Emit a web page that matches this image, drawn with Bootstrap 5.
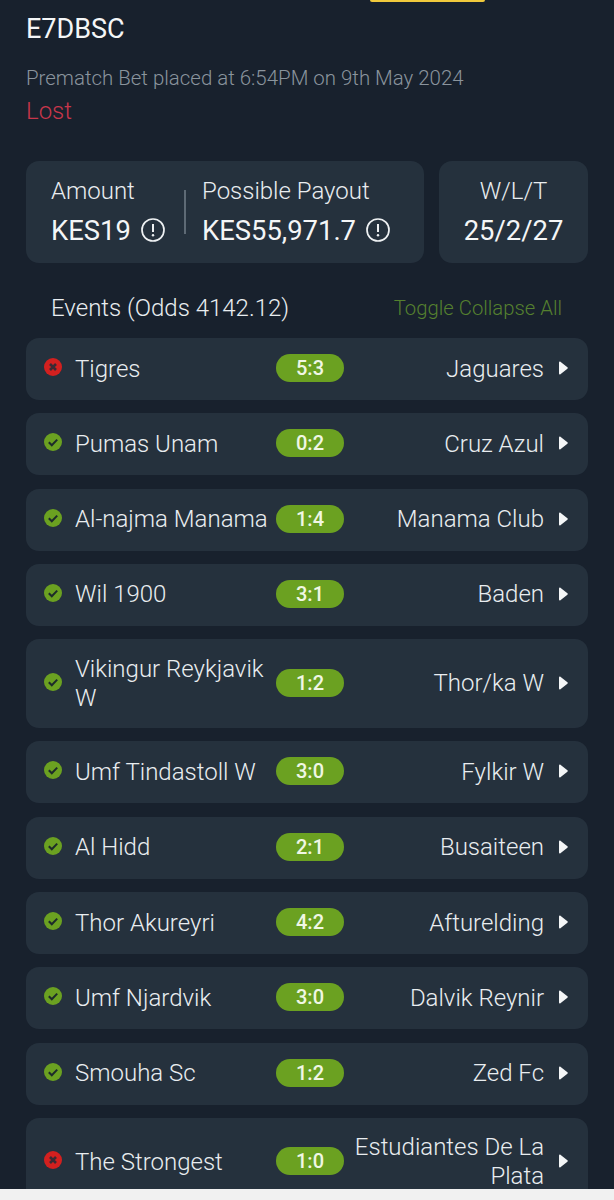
<!DOCTYPE html>
<html lang="en">
<head>
  <meta charset="UTF-8">
  <meta name="viewport" content="width=device-width, initial-scale=1.0">
  <title>Bet E7DBSC</title>
  <link href="https://cdn.jsdelivr.net/npm/bootstrap@5.3.0/dist/css/bootstrap.min.css" rel="stylesheet">
  <style>
    body{background:#f1f1f1;font-family:Roboto,"Liberation Sans",sans-serif;font-weight:300;color:#e9edf0;}
    .screen{width:614px;height:1189px;overflow:hidden;background:#18212d;padding:0 26px;}
    .top-tab{width:115px;height:2px;margin-left:344px;background:#f0c93c;border-radius:0 0 6px 6px;}
    .bet-id{font-size:27px;font-weight:400;line-height:30px;margin-top:12px;color:#f4f6f7;}
    .bet-meta{font-size:20.45px;line-height:28px;margin-top:20px;color:#8a949d;}
    .bet-lost{font-size:24px;line-height:30px;margin-top:4px;color:#c8364b;}
    .stat-row{gap:15px;margin-top:35px;}
    .stat-box{height:102px;background:#25313d;border-radius:13px;}
    .stat-main{width:398px;padding:15px 0 0 25px;}
    .stat-side{width:149px;padding-top:15px;}
    .stat-label{font-size:24px;line-height:30px;}
    .stat-val{font-size:27.4px;font-weight:400;line-height:34px;margin-top:8px;color:#f4f6f7;white-space:nowrap;}
    .stat-amount{width:133px;}
    .stat-line{width:2px;height:44px;margin:14px 16px 0 0;background:#5e6a75;}
    .info-ico{width:26px;height:26px;vertical-align:-3px;margin-left:2px;}
    .events-head{margin-top:28px;padding:0 26px 0 25px;height:34px;}
    .events-title{font-size:24px;}
    .events-toggle{font-size:20.3px;color:#55802f;}
    .match-list{gap:13.3px;margin-top:13px;}
    .match-row{min-height:62px;background:#25313d;border-radius:13px;padding:0 20px 0 18px;font-size:24px;line-height:29px;}
    .match-tall{min-height:89px;}
    .match-ico{width:18px;height:18px;flex:none;margin-right:13px;margin-top:-4px;}
    .match-home{width:201px;flex:none;}
    .match-score{width:68px;height:28px;flex:none;margin-top:-2px;background:#6ba121;border-radius:14px;font-size:20px;font-weight:500;line-height:28px;text-align:center;color:#f0f7e4;}
    .match-away{flex:1;min-width:0;padding-left:10px;text-align:right;}
    .match-arrow{width:10px;height:14px;flex:none;margin-left:14px;margin-top:-2px;}
  </style>
</head>
<body>
<svg width="0" height="0" class="position-absolute">
  <symbol id="ok" viewBox="0 0 18 18"><circle cx="9" cy="9" r="9" fill="#6ba121"/><path d="M4.8 9.2l3 3 5.4-5.6" fill="none" stroke="#1d2b2a" stroke-width="2"/></symbol>
  <symbol id="bad" viewBox="0 0 18 18"><circle cx="9" cy="9" r="9" fill="#d3201f"/><path d="M6 6l6 6M12 6l-6 6" fill="none" stroke="#3a2a33" stroke-width="2.6"/></symbol>
  <symbol id="arr" viewBox="0 0 10 14"><path d="M1 1.5v11c0 .8.8 1.2 1.4.7l7-5.5c.5-.4.5-1 0-1.4l-7-5.5C1.8.3 1 .7 1 1.5z" fill="#f4f6f7"/></symbol>
  <symbol id="inf" viewBox="0 0 26 26"><circle cx="13" cy="13" r="11" fill="none" stroke="#eef1f3" stroke-width="1.7"/><path d="M13 7v8" stroke="#eef1f3" stroke-width="2"/><circle cx="13" cy="18.3" r="1.2" fill="#eef1f3"/></symbol>
</svg>
<div class="screen">
  <div class="top-tab"></div>
  <div class="bet-id">E7DBSC</div>
  <div class="bet-meta">Prematch Bet placed at 6:54PM on 9th May 2024</div>
  <div class="bet-lost">Lost</div>

  <div class="d-flex stat-row">
    <div class="stat-box stat-main d-flex">
      <div class="stat-amount">
        <div class="stat-label">Amount</div>
        <div class="stat-val">KES19 <svg class="info-ico"><use href="#inf"/></svg></div>
      </div>
      <div class="stat-line"></div>
      <div>
        <div class="stat-label">Possible Payout</div>
        <div class="stat-val">KES55,971.7 <svg class="info-ico"><use href="#inf"/></svg></div>
      </div>
    </div>
    <div class="stat-box stat-side text-center">
      <div class="stat-label">W/L/T</div>
      <div class="stat-val">25/2/27</div>
    </div>
  </div>

  <div class="events-head d-flex justify-content-between align-items-center">
    <div class="events-title">Events (Odds 4142.12)</div>
    <div class="events-toggle">Toggle Collapse All</div>
  </div>

  <div class="match-list d-flex flex-column">
    <div class="match-row d-flex align-items-center"><svg class="match-ico"><use href="#bad"/></svg><div class="match-home">Tigres</div><div class="match-score">5:3</div><div class="match-away">Jaguares</div><svg class="match-arrow"><use href="#arr"/></svg></div>
    <div class="match-row d-flex align-items-center"><svg class="match-ico"><use href="#ok"/></svg><div class="match-home">Pumas Unam</div><div class="match-score">0:2</div><div class="match-away">Cruz Azul</div><svg class="match-arrow"><use href="#arr"/></svg></div>
    <div class="match-row d-flex align-items-center"><svg class="match-ico"><use href="#ok"/></svg><div class="match-home">Al-najma Manama</div><div class="match-score">1:4</div><div class="match-away">Manama Club</div><svg class="match-arrow"><use href="#arr"/></svg></div>
    <div class="match-row d-flex align-items-center"><svg class="match-ico"><use href="#ok"/></svg><div class="match-home">Wil 1900</div><div class="match-score">3:1</div><div class="match-away">Baden</div><svg class="match-arrow"><use href="#arr"/></svg></div>
    <div class="match-row match-tall d-flex align-items-center"><svg class="match-ico"><use href="#ok"/></svg><div class="match-home">Vikingur Reykjavik W</div><div class="match-score">1:2</div><div class="match-away">Thor/ka W</div><svg class="match-arrow"><use href="#arr"/></svg></div>
    <div class="match-row d-flex align-items-center"><svg class="match-ico"><use href="#ok"/></svg><div class="match-home">Umf Tindastoll W</div><div class="match-score">3:0</div><div class="match-away">Fylkir W</div><svg class="match-arrow"><use href="#arr"/></svg></div>
    <div class="match-row d-flex align-items-center"><svg class="match-ico"><use href="#ok"/></svg><div class="match-home">Al Hidd</div><div class="match-score">2:1</div><div class="match-away">Busaiteen</div><svg class="match-arrow"><use href="#arr"/></svg></div>
    <div class="match-row d-flex align-items-center"><svg class="match-ico"><use href="#ok"/></svg><div class="match-home">Thor Akureyri</div><div class="match-score">4:2</div><div class="match-away">Afturelding</div><svg class="match-arrow"><use href="#arr"/></svg></div>
    <div class="match-row d-flex align-items-center"><svg class="match-ico"><use href="#ok"/></svg><div class="match-home">Umf Njardvik</div><div class="match-score">3:0</div><div class="match-away">Dalvik Reynir</div><svg class="match-arrow"><use href="#arr"/></svg></div>
    <div class="match-row d-flex align-items-center"><svg class="match-ico"><use href="#ok"/></svg><div class="match-home">Smouha Sc</div><div class="match-score">1:2</div><div class="match-away">Zed Fc</div><svg class="match-arrow"><use href="#arr"/></svg></div>
    <div class="match-row match-tall d-flex align-items-center"><svg class="match-ico"><use href="#bad"/></svg><div class="match-home">The Strongest</div><div class="match-score">1:0</div><div class="match-away">Estudiantes De La Plata</div><svg class="match-arrow"><use href="#arr"/></svg></div>
  </div>
</div>
<script src="https://cdn.jsdelivr.net/npm/bootstrap@5.3.0/dist/js/bootstrap.bundle.min.js"></script>
</body>
</html>
